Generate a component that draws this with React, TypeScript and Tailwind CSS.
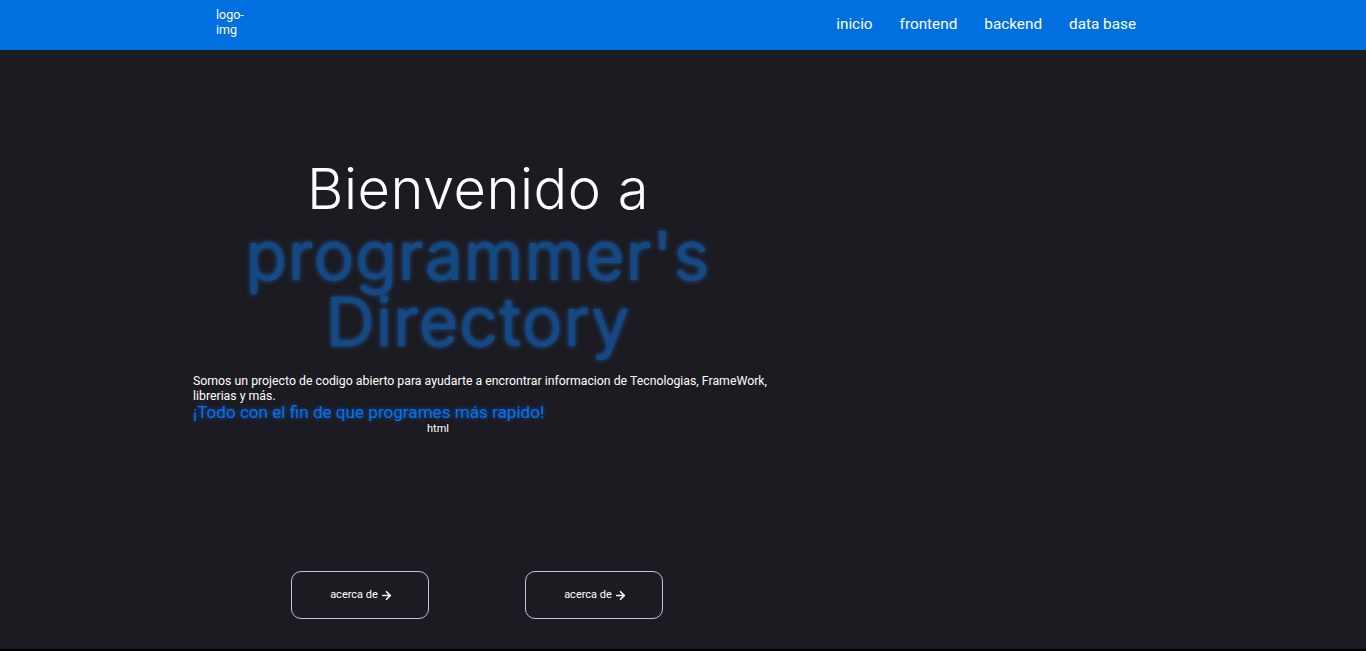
import { ArrowRight } from 'lucide-react';

const navLinks = ['inicio', 'frontend', 'backend', 'data base'];

function AboutButton() {
  return (
    <button className="flex h-[48px] w-[138px] items-center justify-center gap-[2px] pl-[3px] rounded-[10px] border border-[#b4c8e4] text-[11px] text-white">
      acerca de
      <ArrowRight size={13} strokeWidth={3} />
    </button>
  );
}

export default function App() {
  return (
    <div className="flex min-h-[651px] flex-col bg-[#1c1b21] font-['Roboto',sans-serif] border-b-2 border-black">
      {/* Header */}
      <header className="flex h-[50px] items-center justify-between bg-[#0070e0] pl-[216px] pr-[230px]">
        <div className="mb-[7px] w-[30px] text-[12.5px] leading-[15px] text-white">logo-img</div>
        <nav className="mb-[2px] flex gap-[27px] text-[15.3px] text-white">
          {navLinks.map((link) => (
            <a key={link} href="#">
              {link}
            </a>
          ))}
        </nav>
      </header>

      {/* Hero */}
      <main className="flex-1">
        <div className="ml-[193px] flex w-[570px] flex-col pt-[106px]">
          <h1 className="text-center font-['Inter',sans-serif]">
            <span className="block text-[56px] font-light leading-[66px] tracking-[0.5px] text-white">
              Bienvenido a
            </span>
            <span className="block text-[68px] leading-[66px] tracking-[1px] text-[#154983] [text-shadow:0_0_5px_#1a5cab]">
              programmer&apos;s Directory
            </span>
          </h1>
          <p className="mt-[20px] w-[590px] text-[12.3px] leading-[15px] text-white">
            Somos un projecto de codigo abierto para ayudarte a encrontrar informacion de Tecnologias, FrameWork,
            librerias y más.
          </p>
          <p className="text-[17.1px] leading-[16px] text-[#0a72e6] [text-shadow:0_0_5px_#0a5cc0]">
            ¡Todo con el fin de que programes más rapido!
          </p>
          <span className="ml-[234px] mt-[2px] text-[11px] leading-[14px] text-white">html</span>

          <div className="mt-[135px] flex gap-[96px] pl-[98px]">
            <AboutButton />
            <AboutButton />
          </div>
        </div>
      </main>
    </div>
  );
}
